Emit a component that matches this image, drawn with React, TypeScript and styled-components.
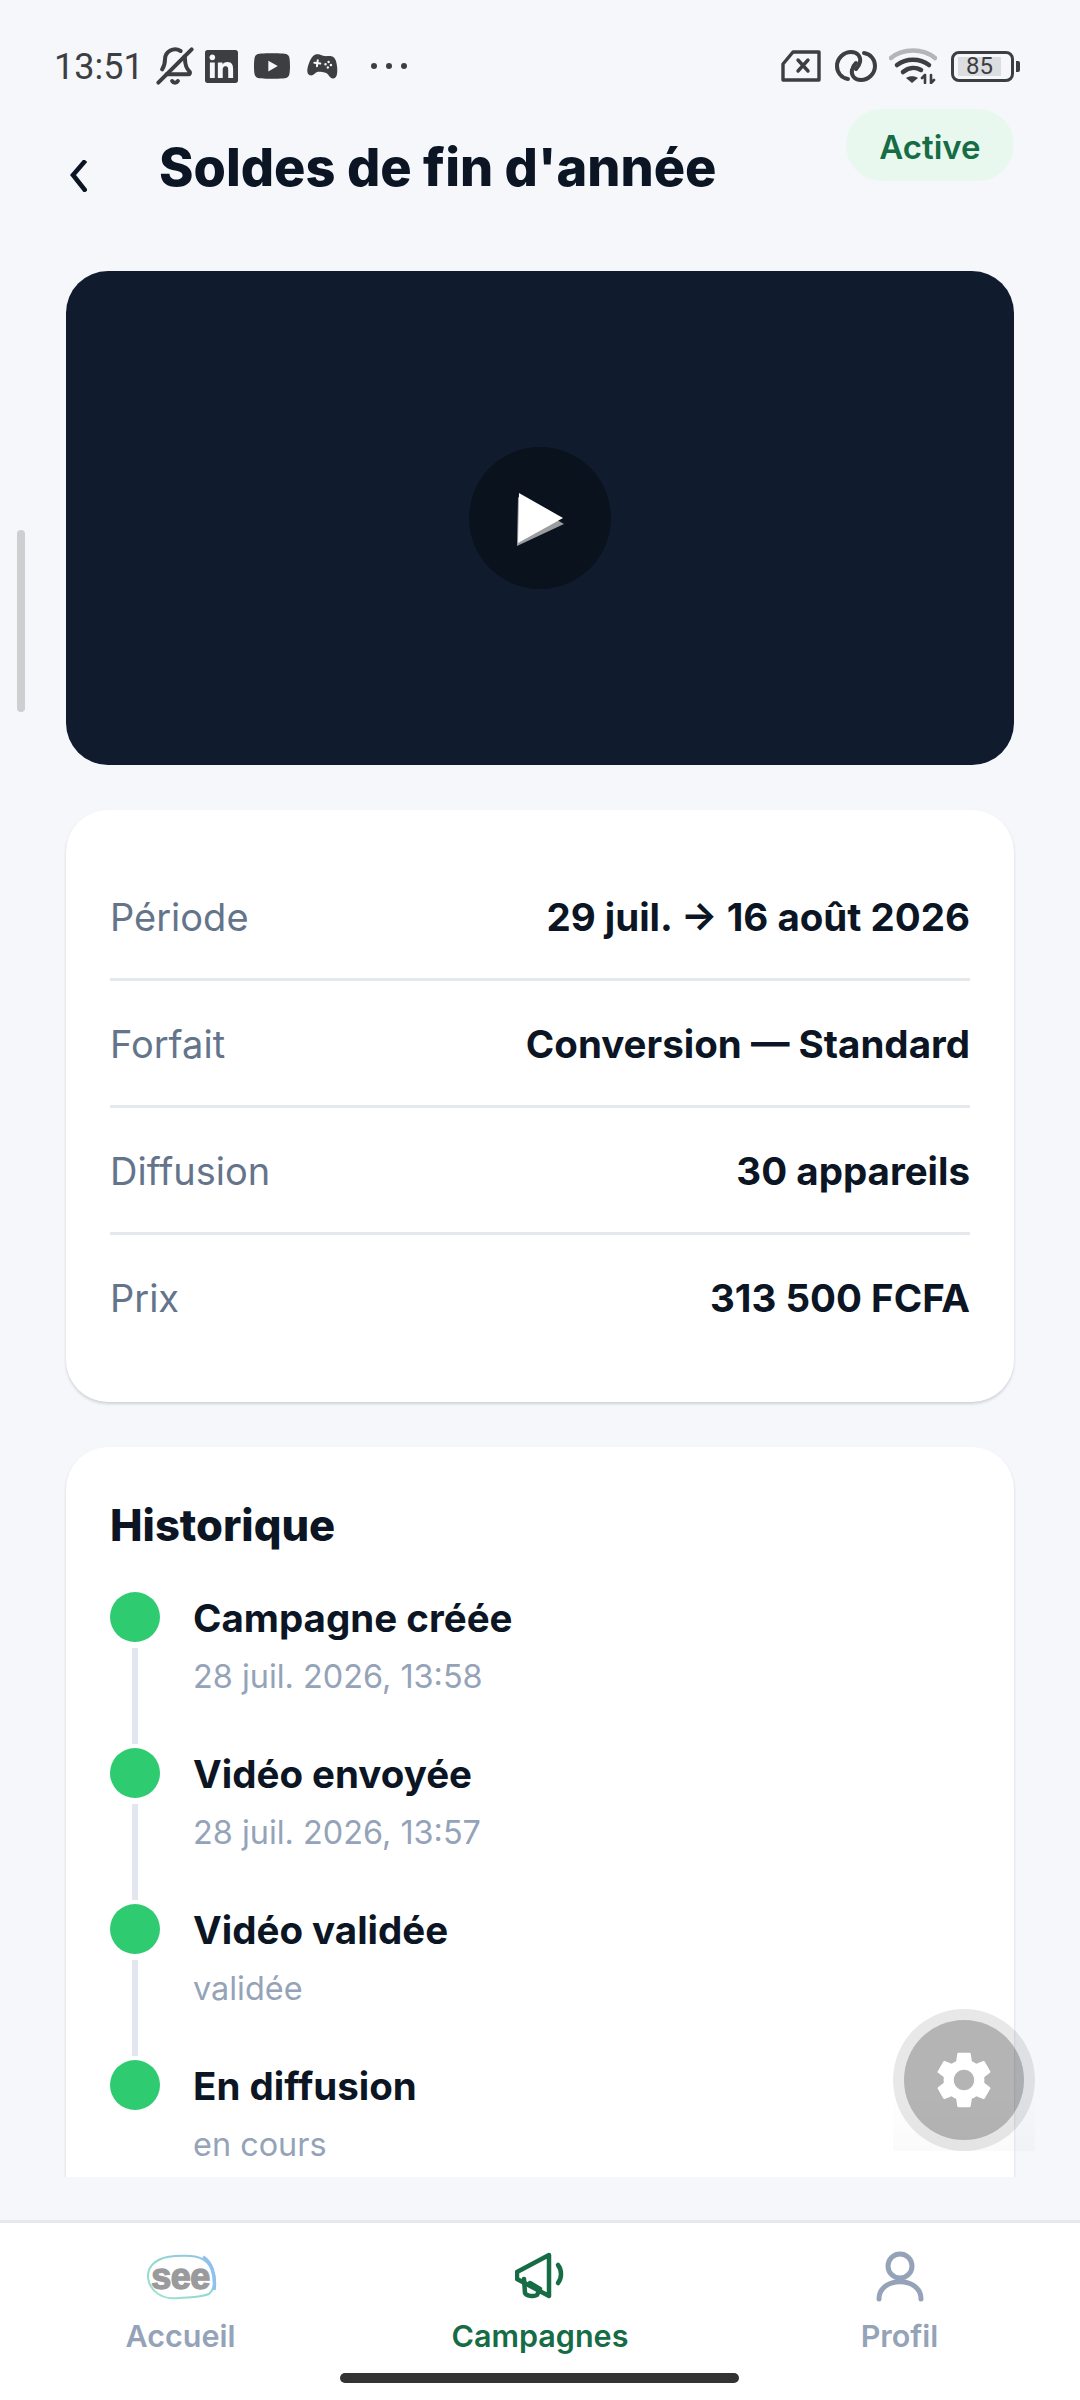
import React from 'react';
import styled, { createGlobalStyle } from 'styled-components';
import { BellOff } from 'lucide-react';
import { MdSettings } from 'react-icons/md';
import { SiLinkedin } from 'react-icons/si';
import { FaYoutube } from 'react-icons/fa';
import { IoGameController } from 'react-icons/io5';

const GlobalStyle = createGlobalStyle`
  html, body {
    margin: 0;
    padding: 0;
    background: #f5f7fb;
    font-family: Inter, "Liberation Sans", sans-serif;
  }
  * { box-sizing: border-box; }
`;

const Screen = styled.div`
  position: relative;
  width: 1080px;
  height: 2400px;
  display: flex;
  flex-direction: column;
  overflow: hidden;
  background: #f5f7fb;
`;

const StatusBar = styled.div`
  height: 98px;
  padding: 34px 60px 0 54px;
  display: flex;
  align-items: center;
  justify-content: space-between;
  color: #3d3e42;
`;

const StatusGroup = styled.div`
  display: flex;
  align-items: center;
`;

const Clock = styled.span`
  font-family: Roboto, sans-serif;
  font-size: 36px;
  margin: 2px 11px 0 0;
`;

const Dots = styled.span`
  display: flex;
  gap: 9px;
  margin-left: 32px;
  i {
    width: 6px;
    height: 6px;
    border-radius: 50%;
    background: #3d3e42;
  }
`;

const Header = styled.div`
  height: 106px;
  padding: 32px 66px 0 70px;
  display: flex;
  align-items: center;
  position: relative;
`;

const BackButton = styled.div`
  margin-top: 18px;
  display: flex;
`;

const Title = styled.h1`
  margin: 0 0 0 72px;
  font-size: 52.3px;
  font-weight: 800;
  color: #0b1524;
`;

const Badge = styled.span`
  position: absolute;
  right: 66px;
  top: 11px;
  width: 168px;
  height: 72px;
  border-radius: 36px;
  background: #e8f8ee;
  color: #166c45;
  font-size: 33px;
  font-weight: 600;
  display: flex;
  align-items: center;
  justify-content: center;
  padding-top: 4px;
`;

const Main = styled.main`
  height: 1973px;
  padding: 67px 66px 0;
  display: flex;
  flex-direction: column;
  gap: 45px;
  overflow: hidden;
  flex: none;
`;

const Video = styled.div`
  height: 494px;
  flex: none;
  border-radius: 42px;
  background: #101c2e;
  display: flex;
  align-items: center;
  justify-content: center;
`;

const PlayCircle = styled.div`
  width: 142px;
  height: 142px;
  border-radius: 50%;
  background: #09121d;
  display: flex;
  align-items: center;
  justify-content: center;
`;

const Card = styled.section<{ $top: number; $bottom: number }>`
  flex: none;
  background: #fff;
  border-radius: 42px;
  padding: ${(p) => p.$top}px 44px ${(p) => p.$bottom}px;
  box-shadow: 0 2px 3px rgba(15, 27, 45, 0.16);
`;

const InfoRow = styled.div`
  height: 127px;
  padding-top: 2px;
  display: flex;
  align-items: center;
  justify-content: space-between;
  border-bottom: 3px solid #e5e8ed;
  &:last-child {
    border-bottom: none;
    padding-bottom: 3px;
  }
`;

const Label = styled.span`
  font-size: 38px;
  color: #64748b;
`;

const Value = styled.span`
  font-size: 38.5px;
  font-weight: 700;
  color: #0b1524;
`;

const SectionTitle = styled.h2`
  margin: 0 0 41px;
  font-size: 43.5px;
  font-weight: 800;
  color: #0b1524;
`;

const Step = styled.div`
  height: 156px;
  display: flex;
  gap: 33px;
`;

const Rail = styled.div`
  width: 50px;
  display: flex;
  flex-direction: column;
  align-items: center;
`;

const Dot = styled.div`
  width: 50px;
  height: 50px;
  flex: none;
  border-radius: 50%;
  background: #2fcb71;
`;

const RailLine = styled.div`
  width: 6px;
  height: 96px;
  margin-top: 6px;
  background: #e2e7ef;
`;

const StepText = styled.div`
  padding-top: 1px;
`;

const StepTitle = styled.div`
  font-size: 38.5px;
  font-weight: 700;
  line-height: 50px;
  color: #0b1524;
`;

const StepSub = styled.div`
  margin-top: 13px;
  font-size: 32.4px;
  line-height: 42px;
  color: #94a3b8;
`;

const Fab = styled.div`
  position: absolute;
  left: 893px;
  top: 2009px;
  width: 142px;
  height: 142px;
  border-radius: 50%;
  background: rgba(0, 0, 0, 0.09);
  display: flex;
  align-items: center;
  justify-content: center;
  &::after {
    content: '';
    position: absolute;
    left: 0;
    right: 0;
    bottom: 0;
    height: 60px;
    background: linear-gradient(to bottom, rgba(0, 0, 0, 0), rgba(0, 0, 0, 0.02));
  }
`;

const FabInner = styled.div`
  width: 120px;
  height: 120px;
  border-radius: 50%;
  background: rgba(0, 0, 0, 0.224);
  color: #fff;
  display: flex;
  align-items: center;
  justify-content: center;
`;

const ScrollThumb = styled.div`
  position: absolute;
  left: 17px;
  top: 530px;
  width: 8px;
  height: 182px;
  border-radius: 4px;
  background: #cfcfd1;
`;

const Nav = styled.nav`
  flex: 1;
  margin-top: 43px;
  background: #fff;
  border-top: 3px solid #e6e8ec;
  display: grid;
  grid-template-columns: 361px 358px 361px;
`;

const NavItem = styled.div<{ $active?: boolean }>`
  padding-top: 23px;
  display: flex;
  flex-direction: column;
  align-items: center;
  gap: 9px;
  font-size: 30.5px;
  font-weight: 600;
  color: ${(p) => (p.$active ? '#166c45' : '#94a3b8')};
`;

const NavIcon = styled.div`
  height: 62px;
  display: flex;
  align-items: center;
  justify-content: center;
`;

const Logo = styled.div`
  position: relative;
  width: 72px;
  height: 46px;
  display: flex;
  align-items: center;
  justify-content: center;
  svg {
    position: absolute;
    inset: 0;
  }
`;

const LogoText = styled.span`
  position: relative;
  font-family: "Liberation Sans", sans-serif;
  font-weight: 700;
  font-size: 36px;
  line-height: 1;
  letter-spacing: -0.5px;
  color: #9a9a9c;
  -webkit-text-stroke: 1.4px #9a9a9c;
  margin-top: -1px;
`;

const HomeBar = styled.div`
  position: absolute;
  left: 340px;
  top: 2373px;
  width: 399px;
  height: 10px;
  border-radius: 5px;
  background: #333;
`;

const BatteryShell = styled.div`
  width: 63px;
  height: 31px;
  border: 3px solid #3d3e42;
  border-radius: 8px;
  padding: 3px 10px 3px 4px;
  display: flex;
`;

const BatteryFill = styled.div`
  flex: 1;
  background: #dcdde0;
  font-family: Roboto, sans-serif;
  font-size: 24px;
  line-height: 19px;
  text-align: center;
  color: #3d3e42;
`;

const BatteryTip = styled.div`
  width: 4px;
  height: 11px;
  margin-left: 2px;
  border-radius: 0 2px 2px 0;
  background: #3d3e42;
`;

const SimIcon = () => (
  <svg width="40" height="32" viewBox="0 0 40 32" fill="none" stroke="#3d3e42" strokeWidth="3.4" strokeLinejoin="round" style={{ marginRight: 14 }}>
    <path d="M2 14 L12 2 H38 V30 H2 Z" />
    <path d="M17 10 L27 21 M27 10 L17 21" strokeLinecap="round" strokeWidth="3.4" />
  </svg>
);

const LinkIcon = () => (
  <svg width="42" height="32" viewBox="0 0 42 32" fill="none" stroke="#3d3e42" strokeWidth="4" strokeLinecap="round" style={{ marginRight: 12 }}>
    <path d="M13 29 C6 28 2 22 2 16 C2 8 9 2 16 2 C23 2 26 7 25 12 C24.5 15 23 17 21 19" />
    <path d="M29 3 C36 4 40 10 40 16 C40 24 33 30 26 30 C19 30 16 25 17 20 C17.5 17 19 15 21 13" />
  </svg>
);

const WifiIcon = () => (
  <svg width="48" height="36" viewBox="0 0 48 36" fill="none" strokeLinecap="round" style={{ marginRight: 14 }}>
    <path d="M2 10 C14 0 34 0 46 10" stroke="#b5b5b7" strokeWidth="4.5" />
    <path d="M8 17 C17 10 31 10 40 17" stroke="#3d3e42" strokeWidth="4.5" />
    <path d="M14 24 C20 19 27 19 32 22" stroke="#3d3e42" strokeWidth="4.5" />
    <path d="M23 35 L17 30 C20 27.5 26 27.5 29 30 Z" fill="#3d3e42" />
    <path d="M36 27 V35 M42 27 V35 M33 30 L36 27 M45 32 L42 35" stroke="#3d3e42" strokeWidth="2.6" />
  </svg>
);

const PlayIcon = () => (
  <svg width="48" height="54" viewBox="0 0 48 54" style={{ marginLeft: 1, marginTop: 3 }}>
    <path d="M1 4 L47 31 L0 53 Z" fill="#9a9ca0" />
    <path d="M2 0 L46 25 L1 50 Z" fill="#fff" />
  </svg>
);

const ChevronIcon = () => (
  <svg width="17" height="32" viewBox="0 0 17 32" fill="none" stroke="#0b1524" strokeWidth="4.6">
    <path d="M15.5 0.5 L3 15 L16 31.5" />
  </svg>
);

const HomeLogo = () => (
  <Logo>
    <svg width="72" height="46" viewBox="0 0 72 46" fill="none">
      <defs>
        <linearGradient id="seeRing" x1="0" y1="1" x2="1" y2="0">
          <stop offset="0" stopColor="#9fe3cf" />
          <stop offset="0.55" stopColor="#8fd6cf" />
          <stop offset="1" stopColor="#90c0ee" />
        </linearGradient>
      </defs>
      <path
        d="M3 24 C2 10 14 3 30 2 C44 1 58 1 65 12 C71 21 71 34 64 40 C54 44 44 43 34 44 C18 46 5 38 3 24 Z"
        stroke="url(#seeRing)"
        strokeWidth="2"
      />
      <path d="M58 3 C66 8 71 20 69 36" stroke="#90c0ee" strokeWidth="3.5" />
    </svg>
    <LogoText>see</LogoText>
  </Logo>
);

const MegaphoneIcon = () => (
  <svg width="50" height="50" viewBox="0 0 50 50" fill="none" stroke="#166c45" strokeWidth="4.5" strokeLinecap="round" strokeLinejoin="round">
    <path d="M34 3 L2 20 V27 L34 44 Z" />
    <path d="M9 27 L10 41 C11 44 19 45 22 43 L25 37 L15 31" />
    <path d="M43 13 C47 18 47 26 43 31" />
  </svg>
);

const UserIcon = () => (
  <svg width="48" height="52" viewBox="0 0 48 52" fill="none" stroke="#94a3b8" strokeWidth="5" strokeLinecap="round">
    <circle cx="24" cy="15" r="12" />
    <path d="M3 48 C3 25 45 25 45 48" />
  </svg>
);

const infos = [
  ['Période', '29 juil. → 16 août 2026'],
  ['Forfait', 'Conversion — Standard'],
  ['Diffusion', '30 appareils'],
  ['Prix', '313 500 FCFA'],
];

const steps = [
  ['Campagne créée', '28 juil. 2026, 13:58'],
  ['Vidéo envoyée', '28 juil. 2026, 13:57'],
  ['Vidéo validée', 'validée'],
  ['En diffusion', 'en cours'],
];

export default function App() {
  return (
    <Screen>
      <GlobalStyle />
      <StatusBar>
        <StatusGroup>
          <Clock>13:51</Clock>
          <BellOff size={40} strokeWidth={2.4} style={{ marginRight: 10, transform: 'scaleX(-1)' }} />
          <SiLinkedin size={33} style={{ marginRight: 15 }} />
          <FaYoutube size={38} style={{ marginRight: 16 }} />
          <IoGameController size={32} style={{ transform: 'rotate(8deg)' }} />
          <Dots><i /><i /><i /></Dots>
        </StatusGroup>
        <StatusGroup>
          <SimIcon />
          <LinkIcon />
          <WifiIcon />
          <BatteryShell>
            <BatteryFill>85</BatteryFill>
          </BatteryShell>
          <BatteryTip />
        </StatusGroup>
      </StatusBar>
      <Header>
        <BackButton><ChevronIcon /></BackButton>
        <Title>Soldes de fin d'année</Title>
        <Badge>Active</Badge>
      </Header>
      <Main>
        <Video>
          <PlayCircle>
            <PlayIcon />
          </PlayCircle>
        </Video>
        <Card $top={44} $bottom={40}>
          {infos.map(([label, value]) => (
            <InfoRow key={label}>
              <Label>{label}</Label>
              <Value>{value}</Value>
            </InfoRow>
          ))}
        </Card>
        <Card $top={52} $bottom={0}>
          <SectionTitle>Historique</SectionTitle>
          {steps.map(([title, sub], i) => (
            <Step key={title}>
              <Rail>
                <Dot />
                {i < steps.length - 1 && <RailLine />}
              </Rail>
              <StepText>
                <StepTitle>{title}</StepTitle>
                <StepSub>{sub}</StepSub>
              </StepText>
            </Step>
          ))}
        </Card>
      </Main>
      <ScrollThumb />
      <Fab>
        <FabInner>
          <MdSettings size={68} />
        </FabInner>
      </Fab>
      <Nav>
        <NavItem>
          <NavIcon><HomeLogo /></NavIcon>
          Accueil
        </NavItem>
        <NavItem $active>
          <NavIcon><MegaphoneIcon /></NavIcon>
          Campagnes
        </NavItem>
        <NavItem>
          <NavIcon><UserIcon /></NavIcon>
          Profil
        </NavItem>
      </Nav>
      <HomeBar />
    </Screen>
  );
}
